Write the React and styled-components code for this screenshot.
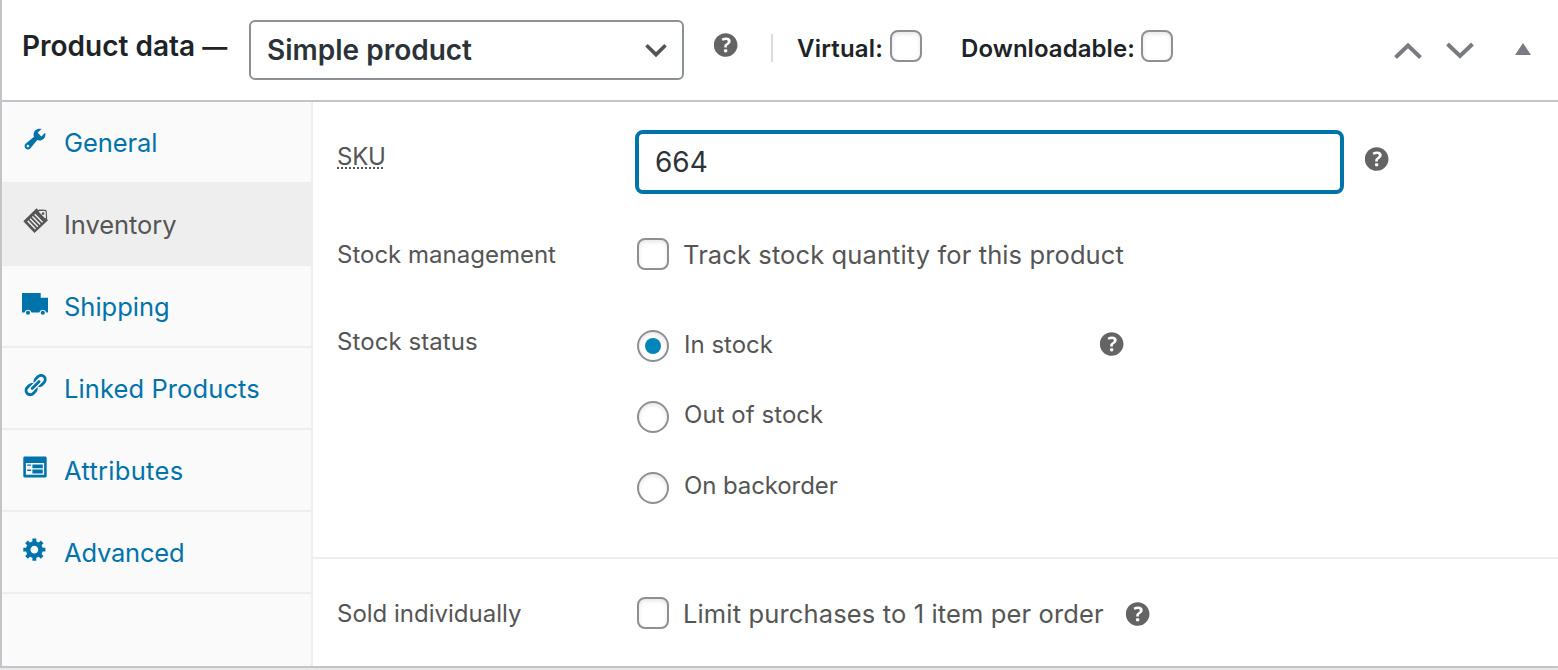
import React from "react";
import styled, { createGlobalStyle } from "styled-components";

const GlobalStyle = createGlobalStyle`
  *, *::before, *::after { box-sizing: border-box; }
  html, body { margin: 0; height: 670px; overflow: hidden; background: #f0f0f1; }
  body { font-family: Inter, "Liberation Sans", sans-serif; }
`;

const Panel = styled.section`
  width: 1558px;
  height: 668px;
  display: flex;
  flex-direction: column;
  background: #fff;
  border-left: 2px solid #c3c4c7;
  border-bottom: 2px solid #c3c4c7;
  box-shadow: 0 2px 2px rgba(0, 0, 0, 0.04);
`;

const Header = styled.header`
  height: 102px;
  flex: none;
  display: flex;
  align-items: flex-start;
  border-bottom: 2px solid #c3c4c7;
  color: #1d2327;
`;

const Txt = styled.span`
  display: block;
  white-space: nowrap;
  font-size: ${(p) => p.$size}px;
  line-height: 32px;
  font-weight: ${(p) => p.$weight || 400};
  letter-spacing: ${(p) => p.$track || 0}px;
`;

const Title = styled(Txt).attrs({ as: "h2" })`
  margin: 30px 0 0 20px;
  width: 227px;
`;

const Dash = styled.span`
  font-size: 25px;
  line-height: 1;
`;

const Select = styled.div`
  width: 435px;
  height: 60px;
  margin-top: 20px;
  padding: 0 14px 0 16px;
  display: flex;
  align-items: center;
  justify-content: space-between;
  border: 2px solid #8c8f94;
  border-radius: 6px;
  color: #2c3338;
`;

const Divider = styled.i`
  width: 2px;
  height: 28px;
  margin: 34px 24px 0 33px;
  background: #dcdcde;
`;

const Toggle = styled.label`
  display: flex;
  align-items: flex-start;
  justify-content: space-between;
  width: ${(p) => p.$width}px;
  margin: 30px 39px 0 0;

  > span { margin-top: 3px; }
`;

const Check = styled.i`
  width: 32px;
  height: 32px;
  flex: none;
  display: flex;
  align-items: center;
  justify-content: center;
  border: 2px solid #8c8f94;
  border-radius: ${(p) => (p.$round ? "50%" : "8px")};
  background: #fff;
  box-shadow: inset 0 2px 4px rgba(0, 0, 0, 0.1);
`;

const Dot = styled.b`
  width: 16px;
  height: 16px;
  border-radius: 50%;
  background: #0085ba;
`;

const Actions = styled.div`
  flex: 1;
  display: flex;
  justify-content: flex-end;
  align-items: flex-start;
  padding: 42px 27px 0 0;
  color: #787c82;
`;

const Body = styled.div`
  flex: 1;
  display: flex;
`;

const Tabs = styled.nav`
  width: 311px;
  flex: none;
  background: #fafafa;
  border-right: 2px solid #eee;
`;

const Tab = styled.a`
  height: 82px;
  display: flex;
  align-items: flex-start;
  padding: 24px 0 0 20px;
  gap: 16px;
  border-bottom: 2px solid #eee;
  background: ${(p) => (p.$active ? "#eee" : "transparent")};
  color: ${(p) => (p.$active ? "#555" : "#0073aa")};

  > span { margin-top: 1px; }
`;

const Fields = styled.main`
  flex: 1;
  color: #555;
`;

const Row = styled.div`
  height: ${(p) => p.$height}px;
  display: flex;
  align-items: flex-start;
`;

const Group = styled.div`
  height: ${(p) => p.$height}px;
  border-bottom: ${(p) => (p.$line ? "2px solid #eee" : "none")};
`;

const Label = styled.div`
  width: 324px;
  flex: none;
  padding: ${(p) => p.$top}px 0 0 24px;
`;

const Abbr = styled.abbr`
  display: block;
  width: 46px;
  height: 28px;
  text-decoration: none;
  border-bottom: 2px dotted #555;
`;

const Input = styled.div`
  width: 709px;
  height: 64px;
  margin: 28px 21px 0 -2px;
  padding: 0 0 0 16px;
  display: flex;
  align-items: center;
  border: 4px solid #0073aa;
  border-radius: 8px;
  color: #2c3338;
`;

const Choice = styled.label`
  display: flex;
  align-items: flex-start;
  margin-top: ${(p) => p.$top || 0}px;
  gap: ${(p) => p.$gap || 15}px;

  > span { margin-top: ${(p) => p.$shift || 0}px; }
`;

const Options = styled.div`
  width: 463px;
  padding-top: 29px;
  display: flex;
  flex-direction: column;
  gap: 39px;
`;

const HelpSvg = styled.svg`
  display: block;
  flex: none;
  margin-top: ${(p) => p.$top}px;
  margin-left: ${(p) => p.$left || 0}px;
  fill: #646464;
`;

const TabSvg = styled.svg`
  display: block;
  flex: none;
  width: 26px;
  height: 26px;
  fill: currentColor;
`;

const Stroke = styled.svg`
  display: block;
  flex: none;
  fill: none;
  stroke: ${(p) => p.$color || "currentColor"};
  margin-right: ${(p) => p.$right || 0}px;
`;

const Triangle = styled.svg`
  display: block;
  fill: currentColor;
  margin: 1px 0 0;
`;

const Help = ({ top, left }) => (
  <HelpSvg $top={top} $left={left} width="24" height="24" viewBox="3.1 2.9 14.2 14.2">
    <path d="M17 10c0-3.87-3.14-7-7-7-3.87 0-7 3.13-7 7s3.13 7 7 7c3.86 0 7-3.13 7-7zm-6.3 1.48H9.14v-.43c0-.38.08-.7.24-.98s.46-.57.88-.89c.41-.29.68-.53.81-.71.14-.18.2-.39.2-.62 0-.25-.09-.44-.28-.58-.19-.13-.45-.19-.79-.19-.58 0-1.25.15-2 .46l-.64-1.28c.87-.49 1.8-.74 2.77-.74.81 0 1.45.2 1.92.58.48.39.71.91.71 1.55 0 .43-.09.8-.29 1.11-.19.32-.57.67-1.11 1.06-.38.28-.61.49-.71.63-.1.15-.15.34-.15.57v.46zm-1.47 2.72c-.18-.17-.27-.42-.27-.73 0-.33.08-.58.26-.75s.43-.25.77-.25c.32 0 .57.09.75.26s.27.42.27.74c0 .3-.09.55-.27.72-.18.18-.43.27-.75.27-.33 0-.58-.09-.76-.26z" />
  </HelpSvg>
);

const tabs = [
  {
    name: "General",
    track: -0.1,
    icon: <path d="M16.68 9.77c-1.34 1.34-3.3 1.67-4.95.99l-5.41 6.52c-.99.99-2.59.99-3.58 0s-.99-2.59 0-3.57l6.52-5.42c-.68-1.65-.35-3.61.99-4.95 1.28-1.28 3.12-1.62 4.72-1.06l-2.89 2.89 2.82 2.82 2.86-2.87c.53 1.58.18 3.39-1.08 4.65zM3.81 16.21c.4.39 1.04.39 1.43 0 .4-.4.4-1.04 0-1.43-.39-.4-1.03-.4-1.43 0-.39.39-.39 1.03 0 1.43z" />,
  },
  {
    name: "Inventory",
    track: -0.05,
    active: true,
    icon: (
      <g>
        <path fillRule="evenodd" d="M1 10.1 11.2.2 20 9.5 9.6 19.2z M4 10.3l6 6.2 .8-.8-6-6.2zM5.8 8.6l6 6.2 .8-.8-6-6.2zM7.6 6.9l6 6.2 .8-.8-6-6.2zM9.4 5.2l6 6.2 .8-.8-6-6.2z" />
        <path d="M12.4 3l.9-1.400 4.700 .2 .6.700.3 5.300-1.200 .8z" fill="#eee" stroke="currentColor" strokeWidth=".9" />
        <circle cx="16.2" cy="4.3" r="1" />
      </g>
    ),
  },
  {
    name: "Shipping",
    track: 0,
    icon: (
      <g transform="translate(0 1.5)">
        <path d="M0 .8h14.4v3.7h5.6v11.3h-1.300a2.800 2.800 0 0 0-5.400 0H7.300a2.800 2.800 0 0 0-5.400 0H0z" />
        <circle cx="4.6" cy="16" r="1.600" />
        <circle cx="16" cy="16" r="1.600" />
      </g>
    ),
  },
  {
    name: "Linked Products",
    track: 0.1,
    icon: <path d="M17.74 2.76c1.68 1.69 1.68 4.41 0 6.1l-1.53 1.52c-1.12 1.12-2.7 1.47-4.14 1.09l2.62-2.61.76-.77.76-.76c.84-.84.84-2.2 0-3.04-.84-.85-2.2-.85-3.04 0l-.77.76-3.38 3.38c-.37-1.44-.02-3.02 1.1-4.14l1.52-1.53c1.69-1.68 4.42-1.68 6.1 0zM8.59 13.43l5.34-5.34c.42-.42.42-1.1 0-1.52-.44-.43-1.13-.39-1.53 0l-5.33 5.34c-.42.42-.42 1.1 0 1.52.44.43 1.13.39 1.52 0zm-.76 2.29l4.14-4.15c.38 1.44.03 3.02-1.09 4.14l-1.52 1.53c-1.69 1.68-4.41 1.68-6.1 0-1.68-1.68-1.68-4.42 0-6.1l1.53-1.52c1.12-1.12 2.7-1.47 4.14-1.1l-4.14 4.15c-.85.84-.85 2.2 0 3.05.84.84 2.2.84 3.04 0z" />,
  },
  {
    name: "Attributes",
    track: 0.3,
    icon: <path d="M2 2h16c.55 0 1 .45 1 1v14c0 .55-.45 1-1 1H2c-.55 0-1-.45-1-1V3c0-.55.45-1 1-1zm15 14V7H3v9h14zM4 8v1h3V8H4zm4 0v3h8V8H8zm-4 4v1h3v-1H4zm4 0v3h8v-3H8z" />,
  },
  {
    name: "Advanced",
    track: -0.2,
    icon: <path d="M18 12h-2.18c-.17.7-.44 1.35-.81 1.93l1.54 1.54-2.1 2.1-1.54-1.54c-.58.36-1.23.63-1.91.79V19H8v-2.18c-.68-.16-1.33-.43-1.91-.79l-1.54 1.54-2.12-2.12 1.54-1.54c-.36-.58-.63-1.23-.79-1.91H1V9.03h2.17c.16-.7.44-1.35.8-1.94L2.43 5.55l2.1-2.1 1.54 1.54c.58-.37 1.24-.64 1.93-.81V2h3v2.18c.68.16 1.33.43 1.91.79l1.54-1.54 2.12 2.12-1.54 1.54c.36.59.64 1.24.8 1.94H18V12zm-8.5 1.5c1.66 0 3-1.34 3-3s-1.34-3-3-3-3 1.34-3 3 1.34 3 3 3z" />,
  },
];

const statuses = [
  { name: "In stock", track: 0, shift: -1, on: true },
  { name: "Out of stock", track: 0.05, shift: -2 },
  { name: "On backorder", track: -0.1, shift: -2 },
];

export default function App() {
  return (
    <>
      <GlobalStyle />
      <Panel>
        <Header>
          <Title $size={28} $weight={600}>Product data <Dash>—</Dash></Title>
          <Select>
            <Txt $size={28} $weight={600}>Simple product</Txt>
            <Stroke $color="#50555a" width="24" height="16" viewBox="0 0 24 16" strokeWidth="3.6">
              <path d="M2.500 3.200l9.500 9.400 9.500-9.400" />
            </Stroke>
          </Select>
          <Help top={33} left={30} />
          <Divider />
          <Toggle $width={125}>
            <Txt $size={24} $weight={600} $track={0.2}>Virtual:</Txt>
            <Check />
          </Toggle>
          <Toggle $width={212}>
            <Txt $size={24} $weight={600} $track={0.05}>Downloadable:</Txt>
            <Check />
          </Toggle>
          <Actions>
            <Stroke $right={24} width="28" height="18" viewBox="0 0 28 18" strokeWidth="4">
              <path d="M1.5 15.5L14 3.6l12.5 11.9" />
            </Stroke>
            <Stroke $right={41} width="28" height="18" viewBox="0 0 28 18" strokeWidth="4">
              <path d="M1.5 2L14 13.9 26.5 2" />
            </Stroke>
            <Triangle width="16" height="13" viewBox="0 0 16 13">
              <path d="M8 0l8 12H0z" />
            </Triangle>
          </Actions>
        </Header>
        <Body>
          <Tabs>
            {tabs.map((t) => (
              <Tab key={t.name} $active={t.active}>
                <TabSvg viewBox="0 0 20 20">{t.icon}</TabSvg>
                <Txt $size={25.5} $track={t.track}>{t.name}</Txt>
              </Tab>
            ))}
          </Tabs>
          <Fields>
            <Group $height={457} $line>
              <Row $height={136}>
                <Label $top={39}>
                  <Txt $size={24} $track={-0.2}><Abbr>SKU</Abbr></Txt>
                </Label>
                <Input><Txt $size={28}>664</Txt></Input>
                <Help top={45} />
              </Row>
              <Row $height={63}>
                <Label $top={1}>
                  <Txt $size={24}>Stock management</Txt>
                </Label>
                <Choice $shift={1} $gap={14}>
                  <Check />
                  <Txt $size={25.5} $track={0.11}>Track stock quantity for this product</Txt>
                </Choice>
              </Row>
              <Row $height={200}>
                <Label $top={25}>
                  <Txt $size={24} $track={0.08}>Stock status</Txt>
                </Label>
                <Options>
                  {statuses.map((s) => (
                    <Choice key={s.name} $shift={s.shift}>
                      <Check $round>{s.on && <Dot />}</Check>
                      <Txt $size={24} $track={s.track}>{s.name}</Txt>
                    </Choice>
                  ))}
                </Options>
                <Help top={31} />
              </Row>
            </Group>
            <Row $height={107}>
              <Label $top={39}>
                <Txt $size={24}>Sold individually</Txt>
              </Label>
              <Choice $top={38} $shift={1} $gap={14}>
                <Check />
                <Txt $size={25.5} $track={0.14}>Limit purchases to 1 item per order</Txt>
              </Choice>
              <Help top={43} left={22} />
            </Row>
          </Fields>
        </Body>
      </Panel>
    </>
  );
}
